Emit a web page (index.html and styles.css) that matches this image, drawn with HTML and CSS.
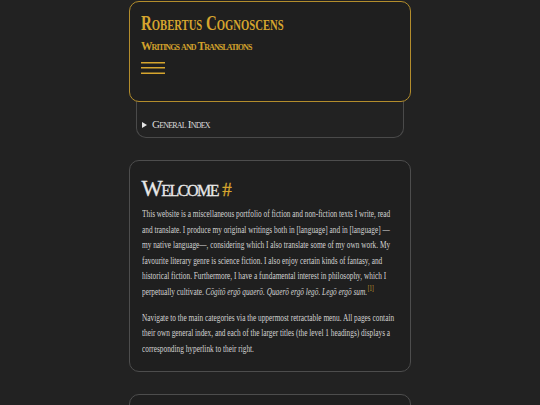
FILE: index.html
```html
<!DOCTYPE html>
<html lang="en">
<head>
<meta charset="utf-8">
<title>Robertus Cognoscens</title>
<link rel="stylesheet" href="styles.css">
</head>
<body>
<div class="page">
  <header class="masthead">
    <h1 class="site-title">Robertus Cognoscens</h1>
    <p class="site-sub">Writings and Translations</p>
    <button class="menu-toggle" type="button" aria-label="Menu">
      <svg width="24" height="12" viewBox="0 0 24 12" aria-hidden="true">
        <path d="M0 0.8H24M0 5.8H24M0 11.2H24" stroke="currentColor" stroke-width="1.5" fill="none"/>
      </svg>
    </button>
  </header>
  <details class="index">
    <summary>General Index</summary>
  </details>
  <main>
    <section class="card">
      <h1 class="card-title">Welcome <a class="anchor" href="#">#</a></h1>
      <div class="prose">
        <p>This website is a miscellaneous portfolio of fiction and non-fiction texts I write, read and translate. I produce my original writings both in [language] and in [language] — my native language—, considering which I also translate some of my own work. My favourite literary genre is science fiction. I also enjoy certain kinds of fantasy, and historical fiction. Furthermore, I have a fundamental interest in philosophy, which I perpetually cultivate. <em>Cōgitō ergō quaerō. Quaerō ergō legō. Legō ergō sum.</em><sup class="fn">[1]</sup></p>
        <p>Navigate to the main categories via the uppermost retractable menu. All pages contain their own general index, and each of the larger titles (the level 1 headings) displays a corresponding hyperlink to their right.</p>
      </div>
    </section>
    <section class="card card-next"></section>
  </main>
</div>
</body>
</html>
```
FILE: styles.css
```css
html, body {
  margin: 0;
  padding: 0;
  background: #222222;
}
body {
  font-family: "Liberation Serif", "Times New Roman", serif;
  color: #cfcfcf;
  overflow: hidden;
}
.page {
  width: 282px;
  margin: 1px auto 0;
}
.masthead {
  background: #1f1f1f;
  border: 1.5px solid #b38d2c;
  border-radius: 10px;
  padding: 9px 11px 27px;
  position: relative;
  z-index: 1;
}
.site-title {
  margin: 0;
  font-size: 21px;
  line-height: 24px;
  font-weight: bold;
  font-variant: small-caps;
  color: #d6a52e;
  white-space: nowrap;
  transform: scaleX(0.71);
  transform-origin: left top;
}
.site-sub {
  margin: 4px 0 0;
  font-size: 11.5px;
  line-height: 14px;
  font-weight: bold;
  font-variant: small-caps;
  letter-spacing: -0.9px;
  color: #d2a12c;
  white-space: nowrap;
}
.menu-toggle {
  display: block;
  margin: 9px 0 0;
  padding: 0;
  border: 0;
  background: none;
  color: #d6a52e;
  line-height: 0;
}
.index {
  margin: -1px 7px 0;
  border: 1px solid #4a4a4a;
  border-top: 0;
  border-radius: 0 0 10px 10px;
  background: #222222;
  padding: 16px 5px 6px;
}
.index summary {
  list-style: none;
  display: flex;
  align-items: center;
  gap: 5px;
  font-size: 11px;
  line-height: 14px;
  font-variant: small-caps;
  letter-spacing: -0.8px;
  color: #dadada;
  cursor: pointer;
}
.index summary::-webkit-details-marker { display: none; }
.index summary::before {
  content: "";
  width: 0;
  height: 0;
  border-left: 5px solid #e4e4e4;
  border-top: 3.5px solid transparent;
  border-bottom: 3.5px solid transparent;
  margin-top: 1px;
}
.card {
  margin-top: 22px;
  background: #1f1f1f;
  border: 1px solid #4d4d4d;
  border-radius: 10px;
  padding: 15px 11px 15px 11.5px;
}
.card-title {
  margin: 0;
  font-size: 22.5px;
  line-height: 26px;
  font-weight: normal;
  font-variant: small-caps;
  letter-spacing: -1.5px;
  color: #e8e8e8;
  -webkit-text-stroke: 0.3px #e8e8e8;
}
.anchor {
  color: #d6a52e;
  -webkit-text-stroke: 0.3px #d6a52e;
  text-decoration: none;
  letter-spacing: 0;
  font-size: 19px;
}
.prose {
  margin-top: 3px;
  width: 382px;
  transform: scaleX(0.665);
  transform-origin: left top;
}
.prose p {
  margin: 0;
  font-size: 11px;
  line-height: 15.5px;
  color: #d2d2d2;
}
.prose p + p {
  margin-top: 10.5px;
}
.fn {
  font-size: 7.5px;
  line-height: 0;
  vertical-align: 4px;
  margin-left: 1px;
  color: #d6a52e;
}
.card-next {
  min-height: 80px;
}
```
